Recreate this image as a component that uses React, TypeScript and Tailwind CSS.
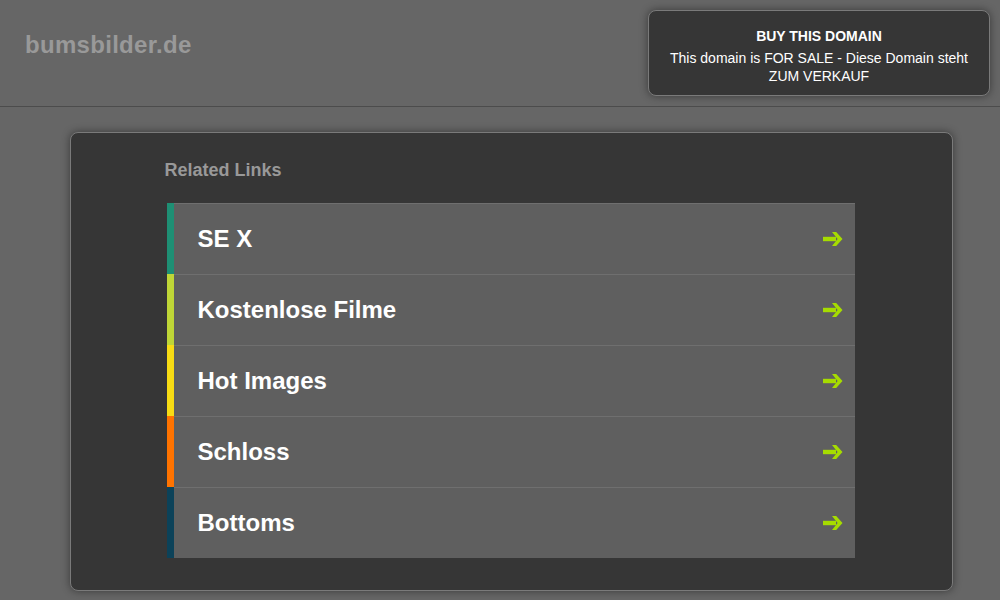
const links = [
  { label: "SE X", bar: "bg-[#1e8f74]" },
  { label: "Kostenlose Filme", bar: "bg-[#bfd637]" },
  { label: "Hot Images", bar: "bg-[#f8dc14]" },
  { label: "Schloss", bar: "bg-[#ff7300]" },
  { label: "Bottoms", bar: "bg-[#0c4259]" },
];

function Arrow() {
  return (
    <svg width="21" height="16" viewBox="0 0 21 16" className="shrink-0">
      <path d="M1 5.8h13v4.4H1z" fill="#a6dc00" />
      <path d="M10 1 L14.2 1 L20.5 8 L14.2 15 L10 15 L15.6 8 Z" fill="#a6dc00" />
    </svg>
  );
}

export default function App() {
  return (
    <div className="min-h-[600px] w-full bg-[#666666] font-['Liberation_Sans',Arial,sans-serif]">
      <header className="flex h-[107px] items-start justify-between border-b border-[#4c4c4c] pl-[25px] pr-[10px]">
        <div className="pt-[31px] text-[24px] font-bold leading-[28px] tracking-[0.3px] text-[#999999]">
          bumsbilder.de
        </div>
        <div className="mt-[10px] h-[86px] w-[342px] rounded-[8px] border border-[#7a7a7a] bg-[#363636] px-3 pt-[17px] text-center text-white shadow-[0_0_8px_rgba(0,0,0,0.45)]">
          <div className="text-[14px] font-bold leading-[17px]">BUY THIS DOMAIN</div>
          <div className="mt-[4px] text-[14px] leading-[18px]">
            This domain is FOR SALE - Diese Domain steht ZUM VERKAUF
          </div>
        </div>
      </header>
      <div className="flex justify-center pt-[25px] pl-[22px]">
        <main className="h-[459px] w-[883px] rounded-[8px] border border-[#7a7a7a] bg-[#363636] pl-[94px] pt-[26px] shadow-[0_0_8px_rgba(0,0,0,0.45)]">
          <h2 className="text-[18px] font-bold leading-[22px] text-[#999999]">Related Links</h2>
          <ul className="mt-[22px] ml-[2px] w-[688px]">
            {links.map((l) => (
              <li key={l.label} className="flex h-[71px] bg-[#5f5f5f]">
                <div className={`w-[7px] shrink-0 ${l.bar}`} />
                <div className="flex flex-1 items-center justify-between border-t border-[#6f6f6f] pl-[24px] pr-[12px]">
                  <span className="text-[24px] font-bold leading-[28px] text-white">{l.label}</span>
                  <Arrow />
                </div>
              </li>
            ))}
          </ul>
        </main>
      </div>
    </div>
  );
}
